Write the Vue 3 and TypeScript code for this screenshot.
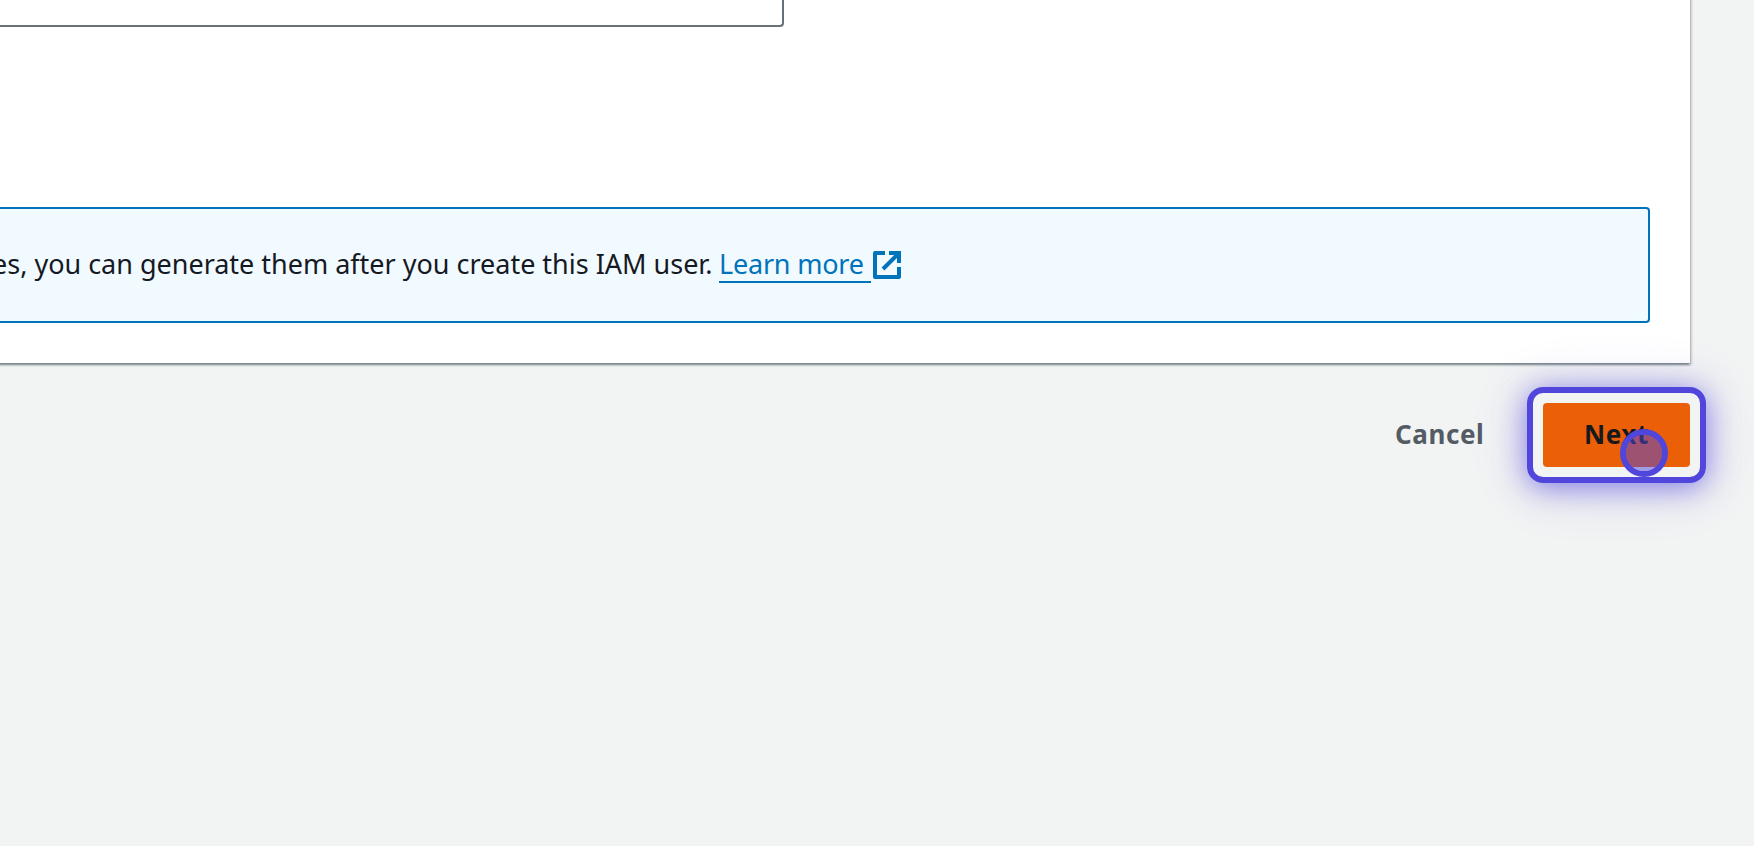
<script setup lang="ts">
const message = 'es, you can generate them after you create this IAM user.'
</script>

<template>
  <main class="page">
    <section class="card">
      <div class="field"></div>
      <div class="alert">
        <span class="message">{{ message }}</span>
        <a class="link">
          <span class="link-text">Learn more</span>
          <svg class="external" viewBox="0 0 28 28" width="28" height="28" aria-hidden="true">
            <path d="M12 2H2V26H26V16" fill="none" stroke="currentColor" stroke-width="4" stroke-linejoin="round" />
            <path d="M16 2H26V12M25 3L10 18" fill="none" stroke="currentColor" stroke-width="4" />
          </svg>
        </a>
      </div>
    </section>
    <footer class="actions">
      <button class="cancel" type="button">Cancel</button>
      <div class="next-wrap">
        <button class="next" type="button"><span class="next-text">Next</span></button>
        <span class="ring"></span>
        <span class="pointer"></span>
      </div>
    </footer>
  </main>
</template>

<style>
body {
  margin: 0;
  background: #f2f3f3;
}
</style>

<style scoped>
.page {
  box-sizing: border-box;
  display: flow-root;
  width: 1754px;
  height: 846px;
  overflow: hidden;
  background: #f2f3f3;
  font-family: 'Noto Sans', 'Open Sans', sans-serif;
  color: #16191f;
}
.card {
  box-sizing: border-box;
  width: 1700px;
  height: 373px;
  margin: -10px 0 0 -10px;
  padding: 10px 0 0 10px;
  background: #fff;
  box-shadow:
    0 2px 2px 0 rgba(0, 28, 36, 0.3),
    2px 2px 2px 0 rgba(0, 28, 36, 0.15),
    -2px 2px 2px 0 rgba(0, 28, 36, 0.15),
    0 0 1px 0 rgba(0, 28, 36, 0.2);
}
.field {
  box-sizing: border-box;
  width: 784px;
  height: 27px;
  margin-bottom: 180px;
  border: solid #687078;
  border-width: 0 2px 2px 0;
  border-bottom-right-radius: 4px;
}
.alert {
  box-sizing: border-box;
  display: flex;
  align-items: center;
  width: 1650px;
  height: 116px;
  border: 2px solid #0073bb;
  border-left: 0;
  border-radius: 0 4px 4px 0;
  background: #f1faff;
  font-size: 27px;
  line-height: 44px;
  white-space: pre;
}
.message {
  width: 727px;
  margin-left: -8px;
  padding-bottom: 2px;
  letter-spacing: -0.01px;
}
.link {
  display: flex;
  align-items: center;
  gap: 2px;
  color: #0073bb;
}
.link-text {
  box-sizing: border-box;
  width: 152px;
  height: 36px;
  line-height: 34px;
  letter-spacing: -0.2px;
  border-bottom: 2px solid #0073bb;
}
.external {
  display: block;
}
.actions {
  display: flex;
  justify-content: flex-end;
  width: 1690px;
  padding-top: 40px;
}
button {
  box-sizing: border-box;
  height: 64px;
  padding: 0 0 2px;
  border: 0;
  font: 700 26px/62px 'Noto Sans', 'Open Sans', sans-serif;
  letter-spacing: 0.6px;
  white-space: nowrap;
}
.cancel {
  width: 149px;
  padding-left: 1px;
  background: transparent;
  color: #545b64;
  text-align: left;
}
.next-wrap {
  position: relative;
  width: 147px;
  height: 64px;
}
.next {
  display: block;
  width: 147px;
  padding-left: 41px;
  border-radius: 4px;
  background: #eb5f07;
  color: #16191f;
  text-align: left;
}
.ring {
  position: absolute;
  box-sizing: border-box;
  inset: -16px;
  border: 6px solid #5046dc;
  border-radius: 16px;
  box-shadow: 0 4px 30px rgba(80, 70, 220, 0.66), 0 4px 60px rgba(80, 70, 220, 0.14);
}
.pointer {
  position: absolute;
  box-sizing: border-box;
  top: 26px;
  left: 77px;
  width: 48px;
  height: 48px;
  border: 6px solid #5046dc;
  border-radius: 50%;
  background: rgba(80, 70, 220, 0.5);
  background-clip: padding-box;
}
</style>
